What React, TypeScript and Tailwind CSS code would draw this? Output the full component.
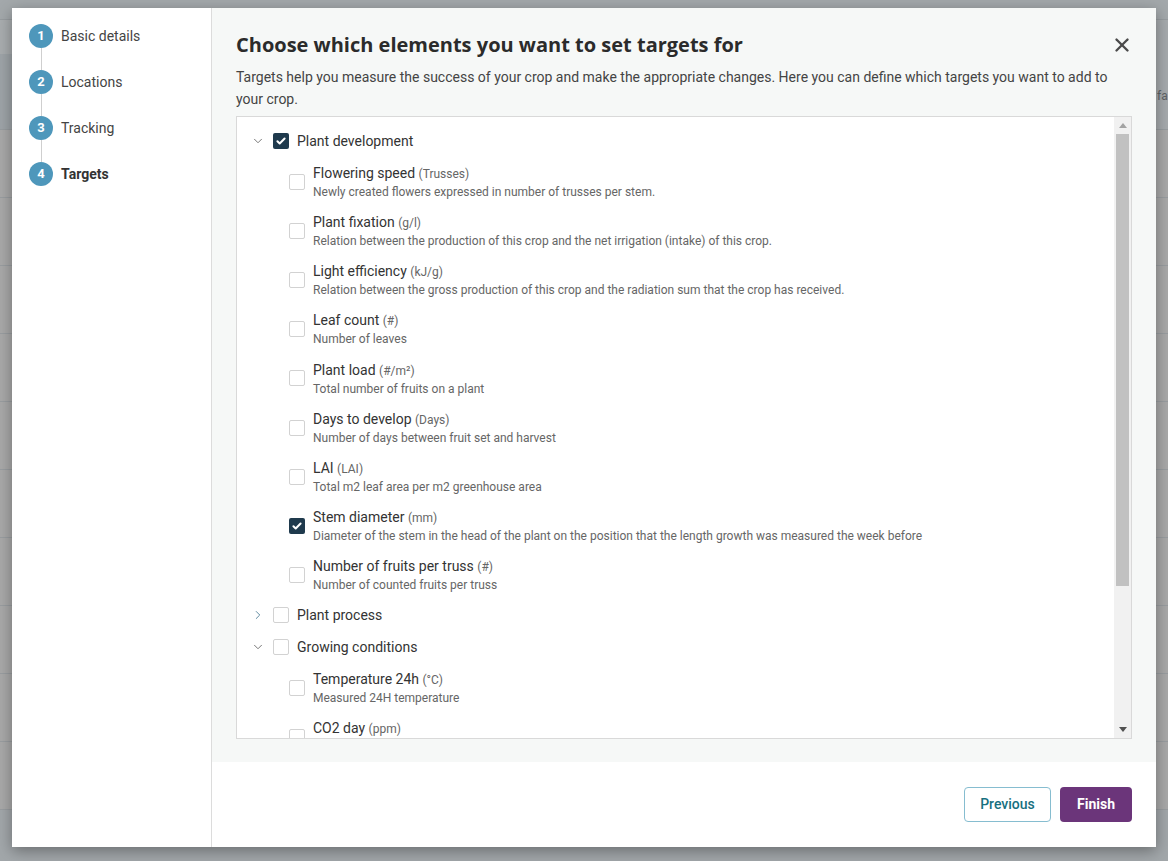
import { ChevronDown, ChevronRight, X } from "lucide-react";

type Target = { name: string; unit: string; desc: string; checked?: boolean };
type Group = { name: string; open: boolean; checked?: boolean; items: Target[] };

const groups: Group[] = [
  {
    name: "Plant development",
    open: true,
    checked: true,
    items: [
      { name: "Flowering speed", unit: "(Trusses)", desc: "Newly created flowers expressed in number of trusses per stem." },
      { name: "Plant fixation", unit: "(g/l)", desc: "Relation between the production of this crop and the net irrigation (intake) of this crop." },
      { name: "Light efficiency", unit: "(kJ/g)", desc: "Relation between the gross production of this crop and the radiation sum that the crop has received." },
      { name: "Leaf count", unit: "(#)", desc: "Number of leaves" },
      { name: "Plant load", unit: "(#/m²)", desc: "Total number of fruits on a plant" },
      { name: "Days to develop", unit: "(Days)", desc: "Number of days between fruit set and harvest" },
      { name: "LAI", unit: "(LAI)", desc: "Total m2 leaf area per m2 greenhouse area" },
      {
        name: "Stem diameter",
        unit: "(mm)",
        desc: "Diameter of the stem in the head of the plant on the position that the length growth was measured the week before",
        checked: true,
      },
      { name: "Number of fruits per truss", unit: "(#)", desc: "Number of counted fruits per truss" },
    ],
  },
  { name: "Plant process", open: false, items: [] },
  {
    name: "Growing conditions",
    open: true,
    items: [
      { name: "Temperature 24h", unit: "(°C)", desc: "Measured 24H temperature" },
      { name: "CO2 day", unit: "(ppm)", desc: "Average CO2 concentration during the day" },
    ],
  },
];

const steps = ["Basic details", "Locations", "Tracking", "Targets"];

function Box({ checked }: { checked?: boolean }) {
  if (checked) {
    return (
      <span className="flex h-4 w-4 shrink-0 items-center justify-center rounded-[2px] bg-[#1f3a4d]">
        <svg width="12" height="12" viewBox="0 0 12 12" fill="none">
          <path d="M2.4 6.2l2.3 2.3 4.9-5" stroke="#fff" strokeWidth="2" strokeLinecap="round" strokeLinejoin="round" />
        </svg>
      </span>
    );
  }
  return <span className="h-4 w-4 shrink-0 rounded-[2px] border border-[#d2d2d2] bg-white" />;
}

function Background() {
  const rows = Array.from({ length: 10 });
  return (
    <div className="flex h-full flex-col">
      <div className="h-[20px] border-b border-[#979c9f] bg-[#a3a8ab]" />
      <div className="flex h-[110px] border-b border-[#979c9f]">
        <div className="flex w-[12px] flex-col">
          <div className="h-[34px] bg-[#a9adaf]" />
          <div className="flex-1 bg-[#9ea4a8]" />
        </div>
        <div className="flex-1" />
        <div className="w-[12px] overflow-hidden bg-[#a6aaad] pt-[68px] pl-[1px] font-['Roboto',sans-serif] text-[12px] leading-[16px] text-[#5f6366]">
          fa
        </div>
      </div>
      {rows.map((_, i) => (
        <div key={i} className="h-[68px] border-b border-[#999da0] bg-[#a9a9a9]" />
      ))}
      <div className="flex-1 bg-[#a2a7aa]" />
    </div>
  );
}

export default function App() {
  return (
    <div className="relative h-[861px] w-full overflow-hidden bg-[#a3a8ab] font-['Roboto',sans-serif]">
      <Background />
      <div className="absolute left-[12px] top-[8px] flex h-[839px] w-[1144px] bg-white shadow-[0_4px_14px_rgba(0,0,0,0.35)]">
        {/* stepper */}
        <div className="w-[200px] shrink-0 border-r border-[#dcdcdc] pl-[17px] pt-[16px]">
          {steps.map((s, i) => (
            <div key={s}>
              <div className="flex h-[24px] items-center">
                <span className="flex h-6 w-6 items-center justify-center rounded-full bg-[#4e97bb] text-[13px] font-bold text-white">
                  {i + 1}
                </span>
                <span
                  className={
                    i === steps.length - 1
                      ? "ml-[8px] text-[14px] font-bold text-[#333]"
                      : "ml-[8px] text-[14px] text-[#444]"
                  }
                >
                  {s}
                </span>
              </div>
              {i < steps.length - 1 && <div className="ml-[11.5px] h-[22px] w-px bg-[#cfcfcf]" />}
            </div>
          ))}
        </div>

        {/* main */}
        <div className="flex min-h-0 min-w-0 flex-1 flex-col">
          <div className="flex min-h-0 flex-1 flex-col bg-[#f6f8f7] px-[24px] pt-[23px] pb-[23px]">
            <div className="flex items-center justify-between">
              <h2 className="font-['Open_Sans',sans-serif] text-[20px] font-bold leading-[28px] text-[#2b2b2b]">
                Choose which elements you want to set targets for
              </h2>
              <X size={22} strokeWidth={2.6} className="-mr-[1px] text-[#4a4a4a]" />
            </div>
            <p className="mt-[7px] text-[14px] leading-[22px] text-[#444]">
              Targets help you measure the success of your crop and make the appropriate changes. Here you can define
              which targets you want to add to your crop.
            </p>
            <div className="mt-[6px] flex min-h-0 flex-1 overflow-hidden border border-[#d9d9d9] bg-white">
              <div className="min-w-0 flex-1 overflow-hidden pt-[8px] pl-[14px]">
                {groups.map((g) => (
                  <div key={g.name}>
                    <div className="flex h-[32px] items-center">
                      <span className="flex w-[22px] items-center">
                        {g.open ? (
                          <ChevronDown size={14} strokeWidth={1.5} className="text-[#666]" />
                        ) : (
                          <ChevronRight size={14} strokeWidth={1.5} className="text-[#4d7b95]" />
                        )}
                      </span>
                      <Box checked={g.checked} />
                      <span className="ml-[8px] text-[14px] text-[#333]">{g.name}</span>
                    </div>
                    {g.open &&
                      g.items.map((t, i) => (
                        <div
                          key={t.name}
                          className={
                            i === 4 ? "flex h-[50px] items-center pl-[38px]" : "flex h-[49px] items-center pl-[38px]"
                          }
                        >
                          <Box checked={t.checked} />
                          <div className="ml-[8px]">
                            <div className="h-[20px] text-[14px] leading-[20px] text-[#333]">
                              {t.name} <span className="text-[12px] leading-[20px] text-[#666]">{t.unit}</span>
                            </div>
                            <div className="mt-[1px] h-[16px] text-[12px] leading-[16px] text-[#666]">{t.desc}</div>
                          </div>
                        </div>
                      ))}
                  </div>
                ))}
              </div>
              {/* scrollbar */}
              <div className="flex w-[17px] shrink-0 flex-col items-center bg-[#f1f1f1]">
                <div className="flex h-[17px] items-center justify-center">
                  <svg width="8" height="5" viewBox="0 0 8 5">
                    <path d="M4 0L8 5H0z" fill="#a3a3a3" />
                  </svg>
                </div>
                <div className="h-[452px] w-[13px] bg-[#c1c1c1]" />
                <div className="flex-1" />
                <div className="flex h-[17px] items-center justify-center">
                  <svg width="8" height="5" viewBox="0 0 8 5">
                    <path d="M0 0H8L4 5z" fill="#505050" />
                  </svg>
                </div>
              </div>
            </div>
          </div>
          <div className="flex h-[85px] shrink-0 items-center justify-end gap-[9px] bg-white pr-[24px]">
            <button className="h-[35px] w-[87px] rounded-[4px] border border-[#86bdd0] bg-white text-[14px] font-medium text-[#17707f]">
              Previous
            </button>
            <button className="h-[35px] w-[72px] rounded-[4px] bg-[#6b357a] text-[14px] font-bold text-white">
              Finish
            </button>
          </div>
        </div>
      </div>
    </div>
  );
}
